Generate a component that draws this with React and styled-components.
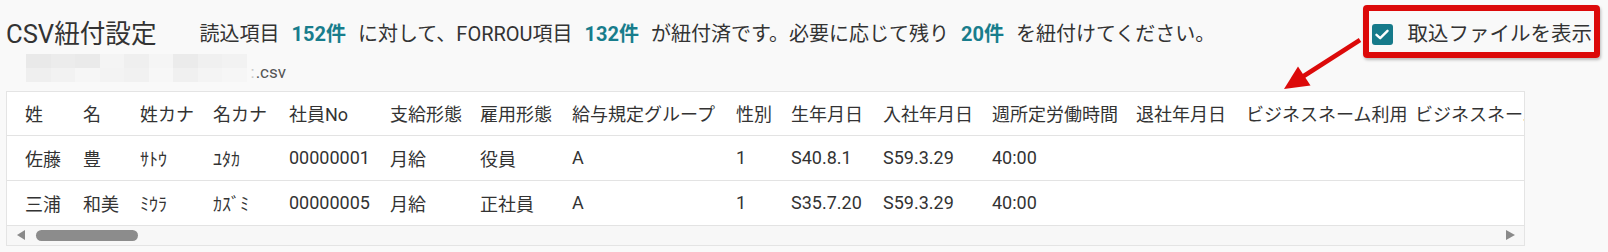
import React from 'react';
import styled, { createGlobalStyle } from 'styled-components';

const GlobalStyle = createGlobalStyle`
  html, body {
    margin: 0;
    padding: 0;
    background: #f9f9f9;
  }
  body {
    font-family: Roboto, "Noto Sans CJK JP", sans-serif;
    color: #333;
  }
`;

const Page = styled.div`
  width: 1608px;
  height: 252px;
  overflow: hidden;
  position: relative;
`;

const Header = styled.div`
  display: flex;
  align-items: center;
  height: 38px;
  padding: 15px 16px 0 6px;
`;

const Title = styled.h1`
  margin: 0 43px 0 0;
  font-size: 25.6px;
  font-weight: 400;
  line-height: 30px;
  color: #333;
  white-space: nowrap;
`;

const Message = styled.p`
  margin: 0;
  font-size: 20px;
  line-height: 28px;
  white-space: nowrap;
  color: #333;
`;

const Count = styled.b`
  margin: 0 12px;
  font-weight: 700;
  color: #187d8c;
`;

const ToggleGroup = styled.label`
  margin-left: auto;
  display: flex;
  align-items: center;
  gap: 15px;
  height: 28px;
  position: relative;

  /* annotation frame */
  &::after {
    content: '';
    position: absolute;
    left: -9px;
    right: -8px;
    top: -15px;
    bottom: -10px;
    border: 6px solid #dc0a0a;
    border-radius: 4px;
    box-shadow: 1px 2px 3px rgba(0, 0, 0, 0.25);
    pointer-events: none;
  }
`;

const Check = styled.span`
  width: 21px;
  height: 21px;
  border-radius: 3px;
  background: #167a8a;
  display: flex;
  align-items: center;
  justify-content: center;
`;

const ToggleText = styled.span`
  font-size: 20.5px;
  line-height: 28px;
  color: #333;
  white-space: nowrap;
`;

const Arrow = styled.svg`
  position: absolute;
  left: 1279px;
  top: 33px;
  width: 90px;
  height: 62px;
  overflow: visible;
`;

const FileRow = styled.div`
  display: flex;
  align-items: flex-end;
  height: 28px;
  margin: 1px 0 0 26px;
`;

const Mosaic = styled.div`
  display: grid;
  grid-template-columns: repeat(9, 24.5px);
  grid-template-rows: 14px 14px;
`;

const Tile = styled.span`
  background: ${(p) => p.$c};
`;

const FileExt = styled.span`
  font-size: 17px;
  line-height: 20px;
  color: #555;
  margin-left: 4px;
`;

const Faint = styled.span`
  color: #c8c8c8;
  margin-right: 1px;
`;

const TableBox = styled.div`
  margin: 9px 0 0 6px;
  width: 1517px;
  border: 1px solid #e4e4e4;
  background: #fff;
  overflow: hidden;
`;

const Grid = styled.table`
  border-collapse: collapse;
  table-layout: fixed;
  width: 1608px;
  font-size: 18px;
  color: #333;
`;

const Th = styled.th`
  box-sizing: border-box;
  width: ${(p) => p.$w}px;
  height: 43px;
  padding: 0 0 0 10px;
  font-weight: 400;
  text-align: left;
  white-space: nowrap;
  border-bottom: 1px solid #e3e3e3;
  &:first-child {
    padding-left: 18px;
  }
`;

const Td = styled.td`
  height: 44px;
  padding: 0 0 0 10px;
  white-space: nowrap;
  border-bottom: 1px solid #e3e3e3;
  &:first-child {
    padding-left: 18px;
  }
`;

const ScrollBar = styled.div`
  display: flex;
  align-items: center;
  height: 19px;
  padding: 0 9px 0 10px;
  background: #f7f7f7;
`;

const ArrowBtn = styled.span`
  width: 0;
  height: 0;
  border-top: 5px solid transparent;
  border-bottom: 5px solid transparent;
  ${(p) =>
    p.$dir === 'left'
      ? 'border-right: 8px solid #8a8a8a;'
      : 'border-left: 9px solid #8a8a8a; margin-left: auto;'}
`;

const Thumb = styled.span`
  width: 102px;
  height: 11px;
  margin-left: 11px;
  border-radius: 6px;
  background: #8c8c8c;
`;

const columns = [
  ['姓', 66], ['名', 57], ['姓カナ', 73], ['名カナ', 76], ['社員No', 101], ['支給形態', 90],
  ['雇用形態', 92], ['給与規定グループ', 164], ['性別', 55], ['生年月日', 92], ['入社年月日', 109],
  ['週所定労働時間', 144], ['退社年月日', 110], ['ビジネスネーム利用', 169], ['ビジネスネーム', 210],
];

const rows = [
  ['佐藤', '豊', 'ｻﾄｳ', 'ﾕﾀｶ', '00000001', '月給', '役員', 'A', '1', 'S40.8.1', 'S59.3.29', '40:00', '', '', ''],
  ['三浦', '和美', 'ﾐｳﾗ', 'ｶｽﾞﾐ', '00000005', '月給', '正社員', 'A', '1', 'S35.7.20', 'S59.3.29', '40:00', '', '', ''],
];

const tiles = [
  '#e9e9e9', '#ececec', '#eaeaea', '#f4f4f4', '#efefef', '#f5f5f5', '#ebebeb', '#f0f0f0', '#f2f2f2',
  '#efefef', '#f2f2f2', '#f6f6f6', '#f3f3f3', '#f1f1f1', '#f7f7f7', '#f0f0f0', '#f4f4f4', '#f6f6f6',
];

export default function App() {
  return (
    <Page>
      <GlobalStyle />
      <Header>
        <Title>CSV紐付設定</Title>
        <Message>
          読込項目<Count>152件</Count>に対して、FORROU項目<Count>132件</Count>が紐付済です。必要に応じて残り<Count>20件</Count>を紐付けてください。
        </Message>
        <ToggleGroup>
          <Check>
            <svg width="14" height="11" viewBox="0 0 14 11">
              <path d="M1.5 5.8 L5.2 9.2 L12.5 1.8" fill="none" stroke="#fff" strokeWidth="2.4" strokeLinecap="round" strokeLinejoin="round" />
            </svg>
          </Check>
          <ToggleText>取込ファイルを表示</ToggleText>
        </ToggleGroup>
      </Header>
      <Arrow viewBox="0 0 90 62">
        <line x1="81" y1="7" x2="24" y2="43.5" stroke="#dc0a0a" strokeWidth="4.5" />
        <polygon points="5,56 31.5,52.5 19,33.5" fill="#dc0a0a" />
      </Arrow>
      <FileRow>
        <Mosaic>
          {tiles.map((c, i) => (
            <Tile key={i} $c={c} />
          ))}
        </Mosaic>
        <FileExt>
          <Faint>:</Faint>.csv
        </FileExt>
      </FileRow>
      <TableBox>
        <Grid>
          <thead>
            <tr>
              {columns.map(([c, w]) => (
                <Th key={c} $w={w}>{c}</Th>
              ))}
            </tr>
          </thead>
          <tbody>
            {rows.map((r, i) => (
              <tr key={i}>
                {r.map((v, j) => (
                  <Td key={j}>{v}</Td>
                ))}
              </tr>
            ))}
          </tbody>
        </Grid>
        <ScrollBar>
          <ArrowBtn $dir="left" />
          <Thumb />
          <ArrowBtn $dir="right" />
        </ScrollBar>
      </TableBox>
    </Page>
  );
}
